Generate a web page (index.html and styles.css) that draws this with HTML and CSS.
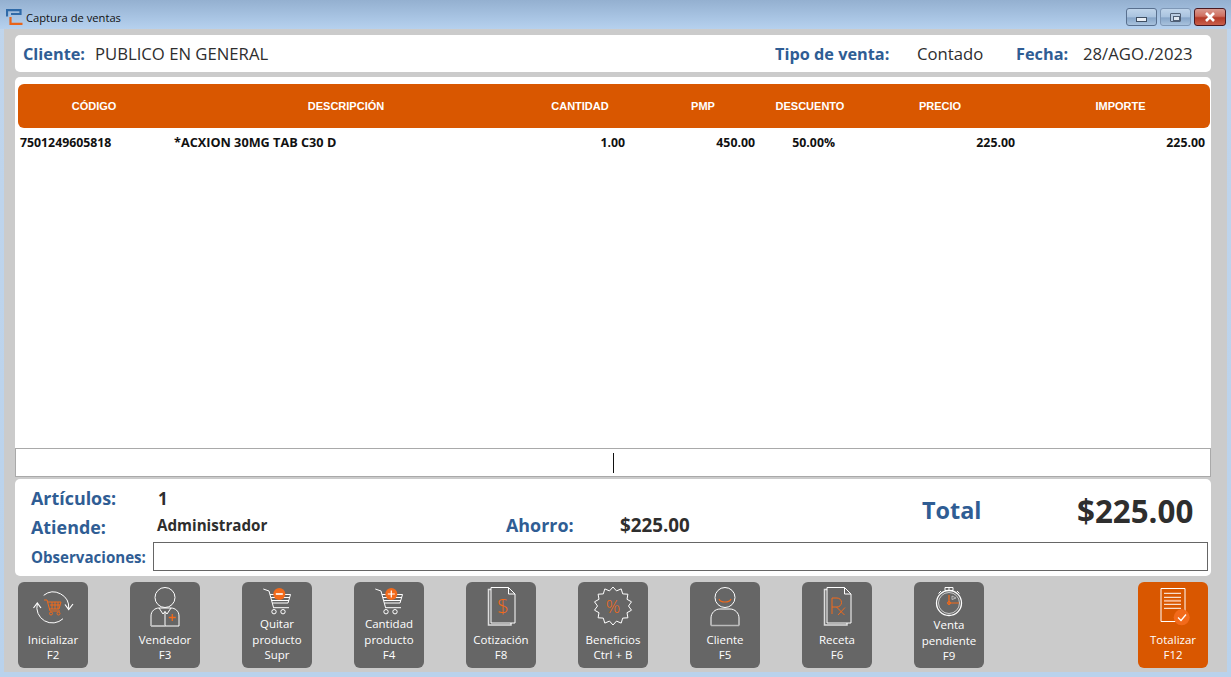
FILE: index.html
```html
<!DOCTYPE html>
<html lang="en">
<head>
    <meta charset="UTF-8">
    <meta name="viewport" content="width=device-width, initial-scale=1.0">
    <title>Captura de ventas</title>
    <link rel="stylesheet" href="styles.css">
</head>
<body>
    <div class="titlebar">
        <div class="title-left">
            <svg class="app-logo" width="17" height="16" viewBox="0 0 17 16" fill="none">
                <path d="M1 7.500V1.100h13.500V5H5" stroke="#2f6aa8" stroke-width="2.200"/>
                <path d="M4.500 8v6.800H16.500" stroke="#e8641a" stroke-width="2.200"/>
            </svg>
            <span class="title-text">Captura de ventas</span>
        </div>
        <div class="win-controls">
            <div class="win-btn"><span class="glyph-min"></span></div>
            <div class="win-btn win-max"><span class="glyph-max"></span></div>
            <div class="win-btn win-close">
                <svg width="14" height="10" viewBox="0 0 14 10"><path d="M3 1l8 8M11 1L3 9" stroke="#fff" stroke-width="2.600"/></svg>
            </div>
        </div>
    </div>

    <div class="window">
        <div class="card info-card">
            <span class="label label-client">Cliente:</span>
            <span class="value client-name">PUBLICO EN GENERAL</span>
            <span class="label label-type">Tipo de venta:</span>
            <span class="value sale-type">Contado</span>
            <span class="label label-date">Fecha:</span>
            <span class="value sale-date">28/AGO./2023</span>
        </div>

        <div class="card table-card">
            <div class="table-head table-cols">
                <div>CÓDIGO</div>
                <div>DESCRIPCIÓN</div>
                <div>CANTIDAD</div>
                <div>PMP</div>
                <div>DESCUENTO</div>
                <div>PRECIO</div>
                <div class="head-total">IMPORTE</div>
            </div>
            <div class="table-row table-cols">
                <div class="cell-code">7501249605818</div>
                <div class="cell-desc">*ACXION 30MG TAB C30 D</div>
                <div class="cell-num pad-qty">1.00</div>
                <div class="cell-num pad-pmp">450.00</div>
                <div class="cell-num pad-disc">50.00%</div>
                <div class="cell-num pad-price">225.00</div>
                <div class="cell-num pad-total">225.00</div>
            </div>
        </div>

        <div class="scan-row"><span class="caret"></span></div>

        <div class="card summary-card">
            <div class="summary-main">
                <div class="summary-left">
                    <div class="summary-line line-items">
                        <span class="sum-label">Artículos:</span>
                        <span class="sum-count">1</span>
                    </div>
                    <div class="summary-line line-seller">
                        <span class="sum-label">Atiende:</span>
                        <span class="sum-seller">Administrador</span>
                        <span class="sum-label savings-label">Ahorro:</span>
                        <span class="sum-savings">$225.00</span>
                    </div>
                </div>
                <div class="summary-total">
                    <span class="total-label">Total</span>
                    <span class="total-value">$225.00</span>
                </div>
            </div>
            <div class="notes-row">
                <span class="notes-label">Observaciones:</span>
                <div class="notes-box"></div>
            </div>
        </div>

        <div class="toolbar">
            <div class="tool-btn">
                <svg class="tool-icon" width="46" height="40" viewBox="0 0 46 40" fill="none" stroke="#fff" stroke-width="1">
                    <path d="M13.700 8.300A15.500 15.500 0 0 1 38.700 21.700"/>
                    <path d="M33 31.700A15.500 15.500 0 0 1 7.300 16.700"/>
                    <path d="M3.500 21l3.800-5 3.700 5M35 17.500l3.700 5 4.300-5.500" stroke-width="1.200"/>
                    <path d="M14 13h3l3 11h10M18 15h13l-2 7H19M20 18h10M22 15v7M25 15v7M28 15v7" stroke="#f26a1b"/>
                    <circle cx="21" cy="26.500" r="1.500" stroke="#f26a1b"/>
                    <circle cx="28.500" cy="26.500" r="1.500" stroke="#f26a1b"/>
                </svg>
                <div class="tool-label">Inicializar<br>F2</div>
            </div>
            <div class="tool-btn">
                <svg class="tool-icon" width="36" height="41" viewBox="0 0 36 41" fill="none" stroke="#fff" stroke-width="1">
                    <circle cx="18" cy="10.500" r="10"/>
                    <path d="M4 39V29c0-5 4-8 8-8h12c4 0 8 3 8 8v10z"/>
                    <path d="M18 24.500V39M12 21l4 6 2-2.500 2 2.500 4-6"/>
                    <path d="M4 39h14" stroke="#bbb" stroke-width="1.600"/>
                    <path d="M25.300 27v7M21.800 30.500h7" stroke="#f26a1b" stroke-width="1.300"/>
                </svg>
                <div class="tool-label">Vendedor<br>F3</div>
            </div>
            <div class="tool-btn">
                <svg class="tool-icon" width="30" height="29" viewBox="0 0 30 29" fill="none" stroke="#fff" stroke-width="1">
                    <use href="#cart"/>
                    <circle cx="17.300" cy="7" r="6" fill="#f26a1b" stroke="none"/>
                    <path d="M13.800 7h7" stroke="#fff" stroke-width="1.600"/>
                </svg>
                <div class="tool-label">Quitar<br>producto<br>Supr</div>
            </div>
            <div class="tool-btn">
                <svg class="tool-icon" width="30" height="29" viewBox="0 0 30 29" fill="none" stroke="#fff" stroke-width="1">
                    <use href="#cart"/>
                    <circle cx="17.300" cy="7" r="6" fill="#f26a1b" stroke="none"/>
                    <path d="M13.800 7h7M17.300 3.500v7" stroke="#fff" stroke-width="1.200"/>
                </svg>
                <div class="tool-label">Cantidad<br>producto<br>F4</div>
            </div>
            <div class="tool-btn">
                <svg class="tool-icon" width="30" height="41" viewBox="0 0 30 41" fill="none" stroke="#fff" stroke-width="1">
                    <use href="#sheets"/>
                    <text x="17" y="26.500" class="icon-sign" fill="#f26a1b" stroke="none" text-anchor="middle">$</text>
                </svg>
                <div class="tool-label">Cotización<br>F8</div>
            </div>
            <div class="tool-btn">
                <svg class="tool-icon" width="42" height="40" viewBox="0 0 42 40" fill="none" stroke="#fff" stroke-width="1">
                    <path d="M21 0L24.500 3.900 29.200 1.900 30.700 6.900 35.900 7.200 35 12.300 39.500 14.800 36.500 19 39.500 23.200 35 25.700 35.900 30.800 30.700 31.100 29.200 36.100 24.500 34.100 21 38 17.500 34.100 12.800 36.100 11.300 31.100 6.100 30.800 7 25.700 2.500 23.200 5.500 19 2.500 14.800 7 12.300 6.100 7.200 11.300 6.900 12.800 1.900 17.500 3.900z"/>
                    <text x="21" y="25.500" class="icon-percent" fill="#f26a1b" stroke="none" text-anchor="middle">%</text>
                </svg>
                <div class="tool-label">Beneficios<br>Ctrl + B</div>
            </div>
            <div class="tool-btn">
                <svg class="tool-icon" width="30" height="41" viewBox="0 0 30 41" fill="none" stroke="#fff" stroke-width="1">
                    <circle cx="15" cy="10.500" r="10"/>
                    <path d="M9 12c1.500 4 10.500 4 12 0" stroke="#f26a1b" stroke-width="1.200"/>
                    <path d="M1 38.500V31c0-5 4-9 9-9h10c5 0 9 4 9 9v7.500z"/>
                    <path d="M1 38.500h28" stroke="#bbb" stroke-width="1.500"/>
                </svg>
                <div class="tool-label">Cliente<br>F5</div>
            </div>
            <div class="tool-btn">
                <svg class="tool-icon" width="30" height="41" viewBox="0 0 30 41" fill="none" stroke="#fff" stroke-width="1">
                    <use href="#sheets"/>
                    <path d="M10 27V11h5a4.500 4.500 0 0 1 0 9h-5M14.500 20l8 8M23 20.500l-7 7.500" stroke="#f26a1b"/>
                </svg>
                <div class="tool-label">Receta<br>F6</div>
            </div>
            <div class="tool-btn">
                <svg class="tool-icon" width="30" height="30" viewBox="0 0 30 30" fill="none" stroke="#fff" stroke-width="1">
                    <circle cx="15" cy="16" r="12.500" stroke-width="1.300"/>
                    <circle cx="15" cy="16" r="10.500" stroke="#ccc"/>
                    <path d="M11 .500h8v3h-8zM15 3.500v-3M4.500 6.500l2.500-2.500M25.500 6.500L23 4"/>
                    <path d="M15 8v8h10M15 16v2" stroke="#f26a1b" stroke-width="1.200"/>
                    <circle cx="15" cy="16" r="1.500" stroke="#f26a1b"/>
                    <path d="M18 9l4 2-4 1.500z" stroke="#ccc" stroke-width=".8"/>
                </svg>
                <div class="tool-label">Venta<br>pendiente<br>F9</div>
            </div>
            <div class="tool-btn tool-primary">
                <svg class="tool-icon" width="34" height="41" viewBox="0 0 34 41" fill="none" stroke="#fff" stroke-width="1">
                    <path d="M5 1.500h24v33H5z"/>
                    <path d="M8 6.300h17M8 10.300h17M8 17.300h17M8 21.300h17"/>
                    <path d="M8 13.800h17" stroke="#f6b48c" stroke-width="2"/>
                    <circle cx="25.700" cy="30.300" r="8" fill="#f26a1b" stroke="none"/>
                    <path d="M22 30.500l3 3 5-6" stroke-width="1.300"/>
                </svg>
                <div class="tool-label">Totalizar<br>F12</div>
            </div>
        </div>
    </div>

    <!-- shared icon parts -->
    <svg class="icon-defs" width="0" height="0">
        <defs>
            <g id="cart">
                <path d="M1.300 2L7 4l4.500 16.500"/>
                <path d="M8 7.500h20.500L26 16H10.500M9 10.500h19M10 13.500h17"/>
                <path d="M11 20.700h16"/>
                <circle cx="12" cy="24.700" r="2.200"/>
                <circle cx="21" cy="24.700" r="2.200"/>
            </g>
            <g id="sheets">
                <path d="M5 2.500H2.500V38H25v-2" stroke="#ddd" stroke-width="1.500"/>
                <path d="M5 .500h17.500L29 7v29H5z"/>
                <path d="M22.500 .500V7H29"/>
            </g>
        </defs>
    </svg>
</body>
</html>
```

FILE: styles.css
```css
* {
    margin: 0;
    padding: 0;
    box-sizing: border-box;
}

html, body {
    height: 100%;
    overflow: hidden;
}

body {
    width: 1231px;
    height: 677px;
    font-family: 'Open Sans', sans-serif;
    background: linear-gradient(180deg, #c0d5ec 0%, #b9d2ec 100%);
    padding: 0 4px 5px;
    display: flex;
    flex-direction: column;
}

.titlebar {
    height: 29px;
    margin: 0 -4px;
    padding: 0 5px 0 6px;
    background: linear-gradient(180deg, #94b0d0 0%, #a8c4e3 60%, #b6d1ee 100%);
    display: flex;
    justify-content: space-between;
    align-items: flex-start;
}

.title-left {
    display: flex;
    align-items: flex-start;
    gap: 3px;
    padding-top: 9px;
}

.title-text {
    font-size: 11.2px;
    line-height: 18px;
    color: #111;
}

.win-controls {
    display: flex;
    gap: 3px;
    padding-top: 8px;
}

.win-btn {
    width: 31px;
    height: 18px;
    border: 1px solid #59708f;
    border-radius: 3px;
    background: linear-gradient(180deg, #bfd4ea 0%, #a9c3df 50%, #86a5c8 55%, #a8c2dd 100%);
    display: flex;
    align-items: center;
    justify-content: center;
}

.win-max {
    border-color: #7e97b6;
}

.win-close {
    width: 32px;
    border-color: #4a1a22;
    background: linear-gradient(180deg, #d99a90 0%, #cf6f60 45%, #b33a28 55%, #c9604c 100%);
}

.glyph-min {
    width: 11px;
    height: 5px;
    margin-top: 4px;
    background: #e8eef5;
    border: 1px solid #3f4f63;
}

.glyph-max {
    width: 11px;
    height: 9px;
    border: 1px solid #4f5f75;
    border-radius: 1px;
    background: #b9cce2;
    position: relative;
}

.glyph-max::after {
    content: "";
    position: absolute;
    left: 2px;
    top: 2px;
    width: 5px;
    height: 3px;
    border: 1px solid #4f5f75;
    background: #dfe8f2;
}

.window {
    flex: 1;
    background-color: #cbcbcb;
    padding: 6px 16px 4px 11px;
    display: flex;
    flex-direction: column;
}

.card {
    background-color: #fff;
    border-radius: 5px;
}

.info-card {
    height: 37px;
    display: flex;
    align-items: baseline;
    padding: 8.5px 0 0 8px;
    line-height: 20px;
}

.label {
    flex: none;
    font-size: 16.3px;
    font-weight: 700;
    color: #2f5d94;
    white-space: nowrap;
}

.label-client { width: 61px; }
.label-type { width: 115px; }
.label-date { width: 49px; }

.value {
    flex: none;
    font-size: 16.7px;
    color: #2e2e2e;
}

.client-name {
    margin-left: 11px;
    width: 680px;
}

.sale-type {
    margin-left: 27px;
    width: 99px;
}

.sale-date {
    margin-left: 18px;
}

.table-card {
    height: 371px;
    margin-top: 5px;
    padding: 7px 1px 0 3px;
    border-radius: 5px 5px 0 0;
}

.table-cols {
    display: grid;
    grid-template-columns: 152px 352px 116px 130px 84px 176px 182px;
}

.table-head {
    height: 44px;
    background-color: #d95700;
    border-radius: 6px;
    color: #fff;
    font-family: 'Liberation Sans', Arial, sans-serif;
    font-size: 11px;
    font-weight: bold;
    text-align: center;
    align-items: center;
    padding-bottom: 1px;
}

.head-total {
    padding-left: 3px;
}

.table-row {
    height: 28px;
    align-items: center;
    font-size: 12.3px;
    font-weight: 700;
    color: #111;
}

.cell-code {
    padding-left: 2px;
}

.cell-desc {
    padding-left: 4px;
    font-size: 12.7px;
}

.cell-num {
    text-align: right;
}

.pad-qty { padding-right: 13px; }
.pad-pmp { padding-right: 13px; }
.pad-disc { padding-right: 17px; }
.pad-price { padding-right: 13px; }
.pad-total { padding-right: 5px; }

.scan-row {
    height: 29px;
    background-color: #fff;
    border: 1px solid #a9a9a9;
    display: flex;
    justify-content: center;
    align-items: center;
}

.caret {
    width: 1px;
    height: 20px;
    background-color: #111;
}

.summary-card {
    height: 97px;
    margin-top: 2px;
    padding: 6px 3px 5px 16px;
    display: flex;
    flex-direction: column;
    justify-content: space-between;
}

.summary-main {
    display: flex;
    justify-content: space-between;
}

.summary-line {
    display: flex;
    align-items: center;
}

.line-items {
    height: 26px;
}

.line-seller {
    height: 26px;
    margin-top: 3px;
}

.sum-label {
    width: 127px;
    font-size: 17.9px;
    font-weight: 700;
    color: #2f5d94;
}

.sum-count {
    font-size: 17px;
    font-weight: 700;
    color: #2e2e2e;
}

.sum-seller {
    width: 349px;
    margin-left: -1px;
    margin-top: -5px;
    font-size: 15.2px;
    font-weight: 700;
    color: #2e2e2e;
}

.savings-label {
    width: 114px;
    margin-top: -4px;
}

.sum-savings {
    margin-top: -4px;
    font-size: 18.8px;
    font-weight: 700;
    color: #2e2e2e;
}

.summary-total {
    display: flex;
    align-items: center;
    height: 50px;
}

.total-label {
    width: 155px;
    font-size: 23.4px;
    font-weight: 700;
    color: #2f5d94;
}

.total-value {
    width: 131px;
    margin-top: 2px;
    font-size: 31.3px;
    font-weight: 700;
    color: #2e2e2e;
}

.notes-row {
    display: flex;
    align-items: center;
    gap: 6px;
}

.notes-label {
    flex: none;
    width: 116px;
    font-size: 15.1px;
    font-weight: 700;
    color: #2f5d94;
    white-space: nowrap;
}

.notes-box {
    flex: 1;
    height: 29px;
    background-color: #fff;
    border: 1px solid #666;
}

.toolbar {
    margin-top: 6px;
    padding: 0 3px;
    display: flex;
    gap: 42px;
}

.tool-btn {
    width: 70px;
    height: 86px;
    background-color: #666;
    border-radius: 6px;
    padding: 5px 0 5.5px;
    display: flex;
    flex-direction: column;
    align-items: center;
    justify-content: space-between;
    color: #fff;
}

.tool-primary {
    background-color: #d95700;
    margin-left: auto;
}

.tool-icon {
    display: block;
    flex: none;
}

.tool-label {
    font-size: 11.5px;
    line-height: 15.5px;
    text-align: center;
    white-space: nowrap;
}

.icon-sign {
    font-family: 'Open Sans', sans-serif;
    font-size: 21px;
    font-weight: 300;
}

.icon-percent {
    font-family: 'Open Sans', sans-serif;
    font-size: 18px;
    font-weight: 300;
}

.icon-defs {
    position: absolute;
}
```
